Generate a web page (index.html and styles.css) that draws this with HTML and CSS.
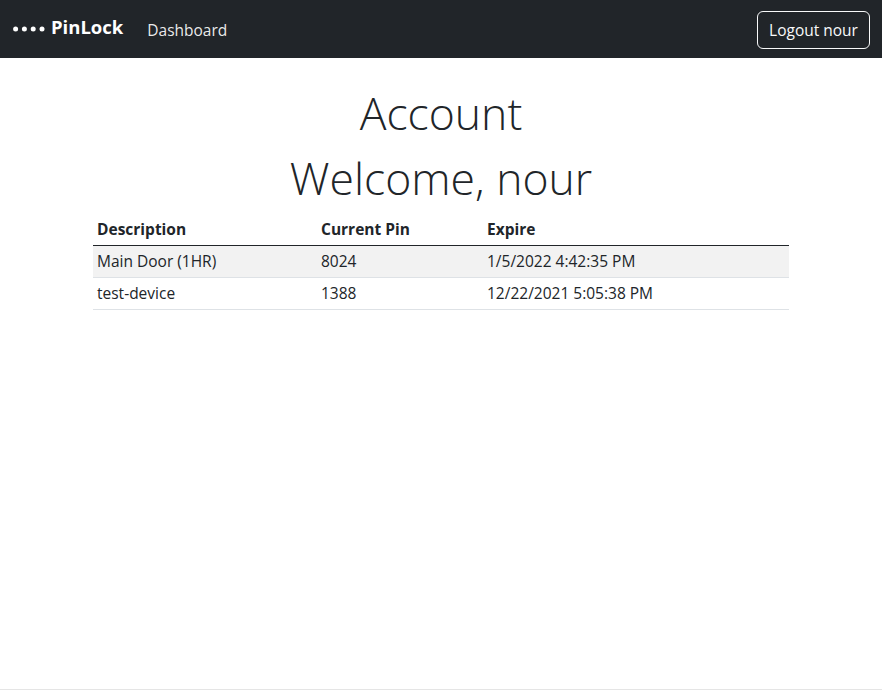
FILE: index.html
```html
<!DOCTYPE html>
<html lang="en">
<head>
<meta charset="utf-8">
<title>Account - PinLock</title>
<link rel="stylesheet" href="styles.css">
</head>
<body>
<nav class="navbar">
  <div class="nav-left">
    <a class="brand" href="#"><svg class="dots" width="32" height="6" viewBox="0 0 32 6" aria-hidden="true"><circle cx="2.6" cy="3" r="2.5" fill="#fff"/><circle cx="11.4" cy="3" r="2.5" fill="#fff"/><circle cx="20.2" cy="3" r="2.5" fill="#fff"/><circle cx="29" cy="3" r="2.5" fill="#fff"/></svg>PinLock</a>
    <a class="nav-link" href="#">Dashboard</a>
  </div>
  <button class="btn-logout">Logout nour</button>
</nav>
<main class="container">
  <h1 class="display">Account</h1>
  <h1 class="display">Welcome, nour</h1>
  <table class="table">
    <thead>
      <tr><th class="c1">Description</th><th class="c2">Current Pin</th><th>Expire</th></tr>
    </thead>
    <tbody>
      <tr class="odd"><td>Main Door (1HR)</td><td>8024</td><td>1/5/2022 4:42:35 PM</td></tr>
      <tr><td>test-device</td><td>1388</td><td>12/22/2021 5:05:38 PM</td></tr>
    </tbody>
  </table>
</main>
<footer class="footer"></footer>
</body>
</html>
```
FILE: styles.css
```css
* { box-sizing: border-box; }
html, body { height: 100%; }
body {
  margin: 0;
  font-family: "Segoe UI", "Open Sans", "Noto Sans", sans-serif;
  font-size: 15.5px;
  line-height: 1.5;
  color: #212529;
  background: #fff;
  display: flex;
  flex-direction: column;
}
.navbar {
  height: 58px;
  background: #212529;
  display: flex;
  align-items: center;
  justify-content: space-between;
  padding: 0 12px 0 13px;
  flex: none;
}
.nav-left { display: flex; align-items: center; }
.brand {
  color: #fff;
  text-decoration: none;
  font-weight: 700;
  font-size: 18.5px;
  margin-right: 24px;
  display: flex;
  align-items: center;
  position: relative;
  top: -2px;
}
.dots { margin-right: 6px; position: relative; top: 2px; }
.nav-link {
  color: rgba(255,255,255,0.92);
  text-decoration: none;
  font-size: 15.5px;
  position: relative;
  top: 2px;
}
.btn-logout {
  font-family: inherit;
  font-size: 15.5px;
  line-height: 1.5;
  white-space: nowrap;
  color: #f8f9fa;
  background: transparent;
  border: 1px solid #f8f9fa;
  border-radius: 6px;
  padding: 7px 10px 4px;
  width: 113px;
  height: 38px;
  margin-top: 1px;
}
.container {
  width: 720px;
  margin: 0 auto;
  padding: 26px 12px 0;
  flex: 1;
}
.display {
  font-weight: 300;
  font-size: 44.5px;
  line-height: 57px;
  margin: 0 0 8px;
  text-align: center;
}
.table {
  width: 100%;
  border-collapse: collapse;
}
.table th, .table td {
  text-align: left;
  padding: 4px;
  line-height: 23px;
  border-bottom: 1px solid #dee2e6;
}
.table th { font-weight: 700; border-bottom: 1px solid #212529; }
.c1 { width: 224px; }
.c2 { width: 166px; }
.odd td { background: #f2f2f2; }
.footer {
  flex: none;
  height: 1px;
  border-top: 1px solid #e5e5e5;
}
```
